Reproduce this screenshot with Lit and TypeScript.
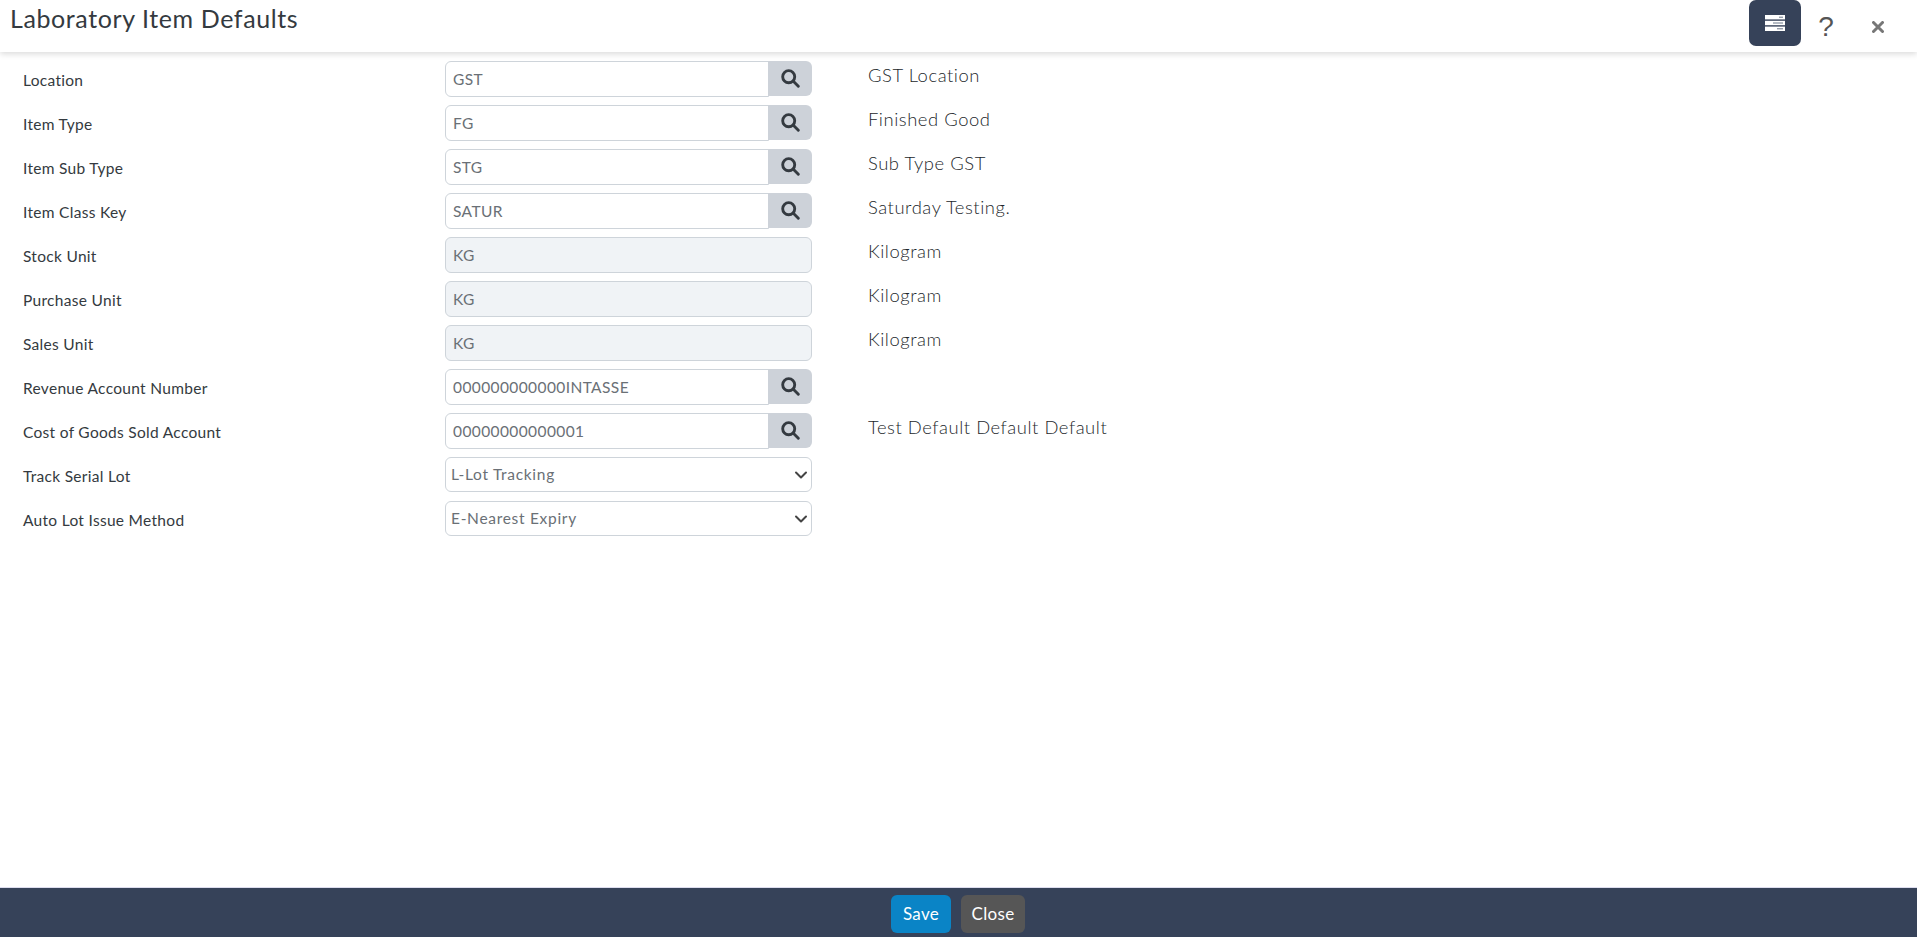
import { LitElement, html, css, svg } from "lit";
import { customElement } from "lit/decorators.js";

type Row = { label: string; kind: "lookup" | "readonly" | "select"; value: string; desc?: string };

const ROWS: Row[] = [
  { label: "Location", kind: "lookup", value: "GST", desc: "GST Location" },
  { label: "Item Type", kind: "lookup", value: "FG", desc: "Finished Good" },
  { label: "Item Sub Type", kind: "lookup", value: "STG", desc: "Sub Type GST" },
  { label: "Item Class Key", kind: "lookup", value: "SATUR", desc: "Saturday Testing." },
  { label: "Stock Unit", kind: "readonly", value: "KG", desc: "Kilogram" },
  { label: "Purchase Unit", kind: "readonly", value: "KG", desc: "Kilogram" },
  { label: "Sales Unit", kind: "readonly", value: "KG", desc: "Kilogram" },
  { label: "Revenue Account Number", kind: "lookup", value: "000000000000INTASSE" },
  { label: "Cost of Goods Sold Account", kind: "lookup", value: "00000000000001", desc: "Test Default Default Default" },
  { label: "Track Serial Lot", kind: "select", value: "L-Lot Tracking" },
  { label: "Auto Lot Issue Method", kind: "select", value: "E-Nearest Expiry" },
];

const searchIcon = svg`<svg width="19" height="19" viewBox="0 0 18 18" fill="none" stroke="#343a40" stroke-width="2.7" stroke-linecap="round"><circle cx="7.3" cy="7.3" r="5.7"/><path d="M11.7 11.7 16.4 16.4"/></svg>`;

@customElement("app-root")
export class AppRoot extends LitElement {
  static styles = css`
    :host { display: flex; flex-direction: column; height: 937px; width: 1917px; background: #fff; color: #343a40; font-family: "Lato", "Noto Sans", sans-serif; overflow: hidden; }
    .head { flex: none; height: 52px; display: flex; justify-content: space-between; align-items: flex-start; box-shadow: 0 2px 6px rgba(0,0,0,.15); position: relative; }
    h1 { margin: 0; padding: 3px 0 0 10px; font-size: 25px; font-weight: 400; line-height: 31px; letter-spacing: .6px; color: #343a40; }
    .tools { display: flex; align-items: center; height: 46px; }
    .menu { width: 52px; height: 46px; box-sizing: border-box; border-radius: 7px; background: #364259; display: flex; align-items: center; justify-content: center; }
    .help { width: 50px; text-align: center; font-size: 28px; font-weight: 400; color: #555; font-family: "Liberation Sans", sans-serif; padding-top: 7px; }
    .x { width: 22px; margin-right: 28px; margin-left: 16px; display: flex; justify-content: center; padding-top: 8px; }
    .body { flex: 1; padding: 9px 0 0 23px; }
    .row { height: 44px; display: flex; align-items: flex-start; }
    .label { width: 422px; flex: none; font-size: 15.5px; font-weight: 400; line-height: 20px; padding-top: 9px; letter-spacing: .3px; color: #343a40; }
    .ctl { width: 367px; flex: none; height: 36px; box-sizing: border-box; display: flex; position: relative; }
    .input { flex: 1; box-sizing: border-box; height: 36px; border: 1px solid #ced4da; border-radius: 6px; padding: 0 7px; font-size: 15.5px; font-weight: 400; line-height: 34px; color: #6a7076; letter-spacing: .4px; white-space: nowrap; background: #fff; }
    .input.ro { background: #f0f3f6; }
    .lookup .input { border-radius: 6px 0 0 6px; margin-right: -1px; }
    .btn { flex: none; width: 44px; height: 35px; background: #cdd2d9; border-radius: 0 6px 6px 0; display: flex; align-items: center; justify-content: center; position: relative; }
    .sel { height: 35px; width: 367px; box-sizing: border-box; border: 1px solid #ced4da; border-radius: 6px; padding: 0 3px 0 5px; font-size: 15.5px; line-height: 33px; color: #6a7076; letter-spacing: .7px; display: flex; justify-content: space-between; align-items: center; }
    .desc { margin-left: 56px; font-size: 18.4px; font-weight: 300; line-height: 24px; padding-top: 2px; letter-spacing: .55px; color: #23272b; }
    .foot { flex: none; height: 50px; background: #364259; display: flex; justify-content: center; gap: 10px; padding: 7px 1px 0 0; box-sizing: border-box; border-top: 1px solid #dde; }
    .b { height: 38px; box-sizing: border-box; border-radius: 6px; color: #fff; font-size: 17px; line-height: 38px; text-align: center; letter-spacing: .3px; }
    .save { width: 60px; background: #0a84c6; }
    .close { width: 64px; background: #565656; }
  `;

  private renderControl(r: Row) {
    if (r.kind === "select") {
      return html`<div class="sel"><span>${r.value}</span><svg width="14" height="10" viewBox="0 0 14 10" fill="none" stroke="#444" stroke-width="2" stroke-linecap="round" stroke-linejoin="round"><path d="M2 2.5 7 7.5 12 2.5"/></svg></div>`;
    }
    if (r.kind === "readonly") {
      return html`<div class="ctl"><div class="input ro">${r.value}</div></div>`;
    }
    return html`<div class="ctl lookup"><div class="input">${r.value}</div><div class="btn">${searchIcon}</div></div>`;
  }

  render() {
    return html`
      <div class="head">
        <h1>Laboratory Item Defaults</h1>
        <div class="tools">
          <div class="menu">
            <svg width="20" height="16" viewBox="0 0 20 16">
              <rect x="0" y="0" width="20" height="4.4" fill="#fff"/>
              <rect x="0" y="5.8" width="20" height="4.4" fill="#fff"/>
              <rect x="0" y="11.6" width="20" height="4.4" fill="#fff"/>
              <path d="M14 2.2H18M8 8H18M12 13.8H18" stroke="#6b7688" stroke-width="1"/>
            </svg>
          </div>
          <div class="help">?</div>
          <div class="x"><svg width="12" height="12" viewBox="0 0 12 12" stroke="#777" stroke-width="3" stroke-linecap="round"><path d="M1.5 1.5 10.5 10.5M10.5 1.5 1.5 10.5"/></svg></div>
        </div>
      </div>
      <div class="body">
        ${ROWS.map(r => html`
          <div class="row">
            <div class="label">${r.label}</div>
            ${this.renderControl(r)}
            ${r.desc ? html`<div class="desc">${r.desc}</div>` : ""}
          </div>`)}
      </div>
      <div class="foot">
        <div class="b save">Save</div>
        <div class="b close">Close</div>
      </div>
    `;
  }
}
